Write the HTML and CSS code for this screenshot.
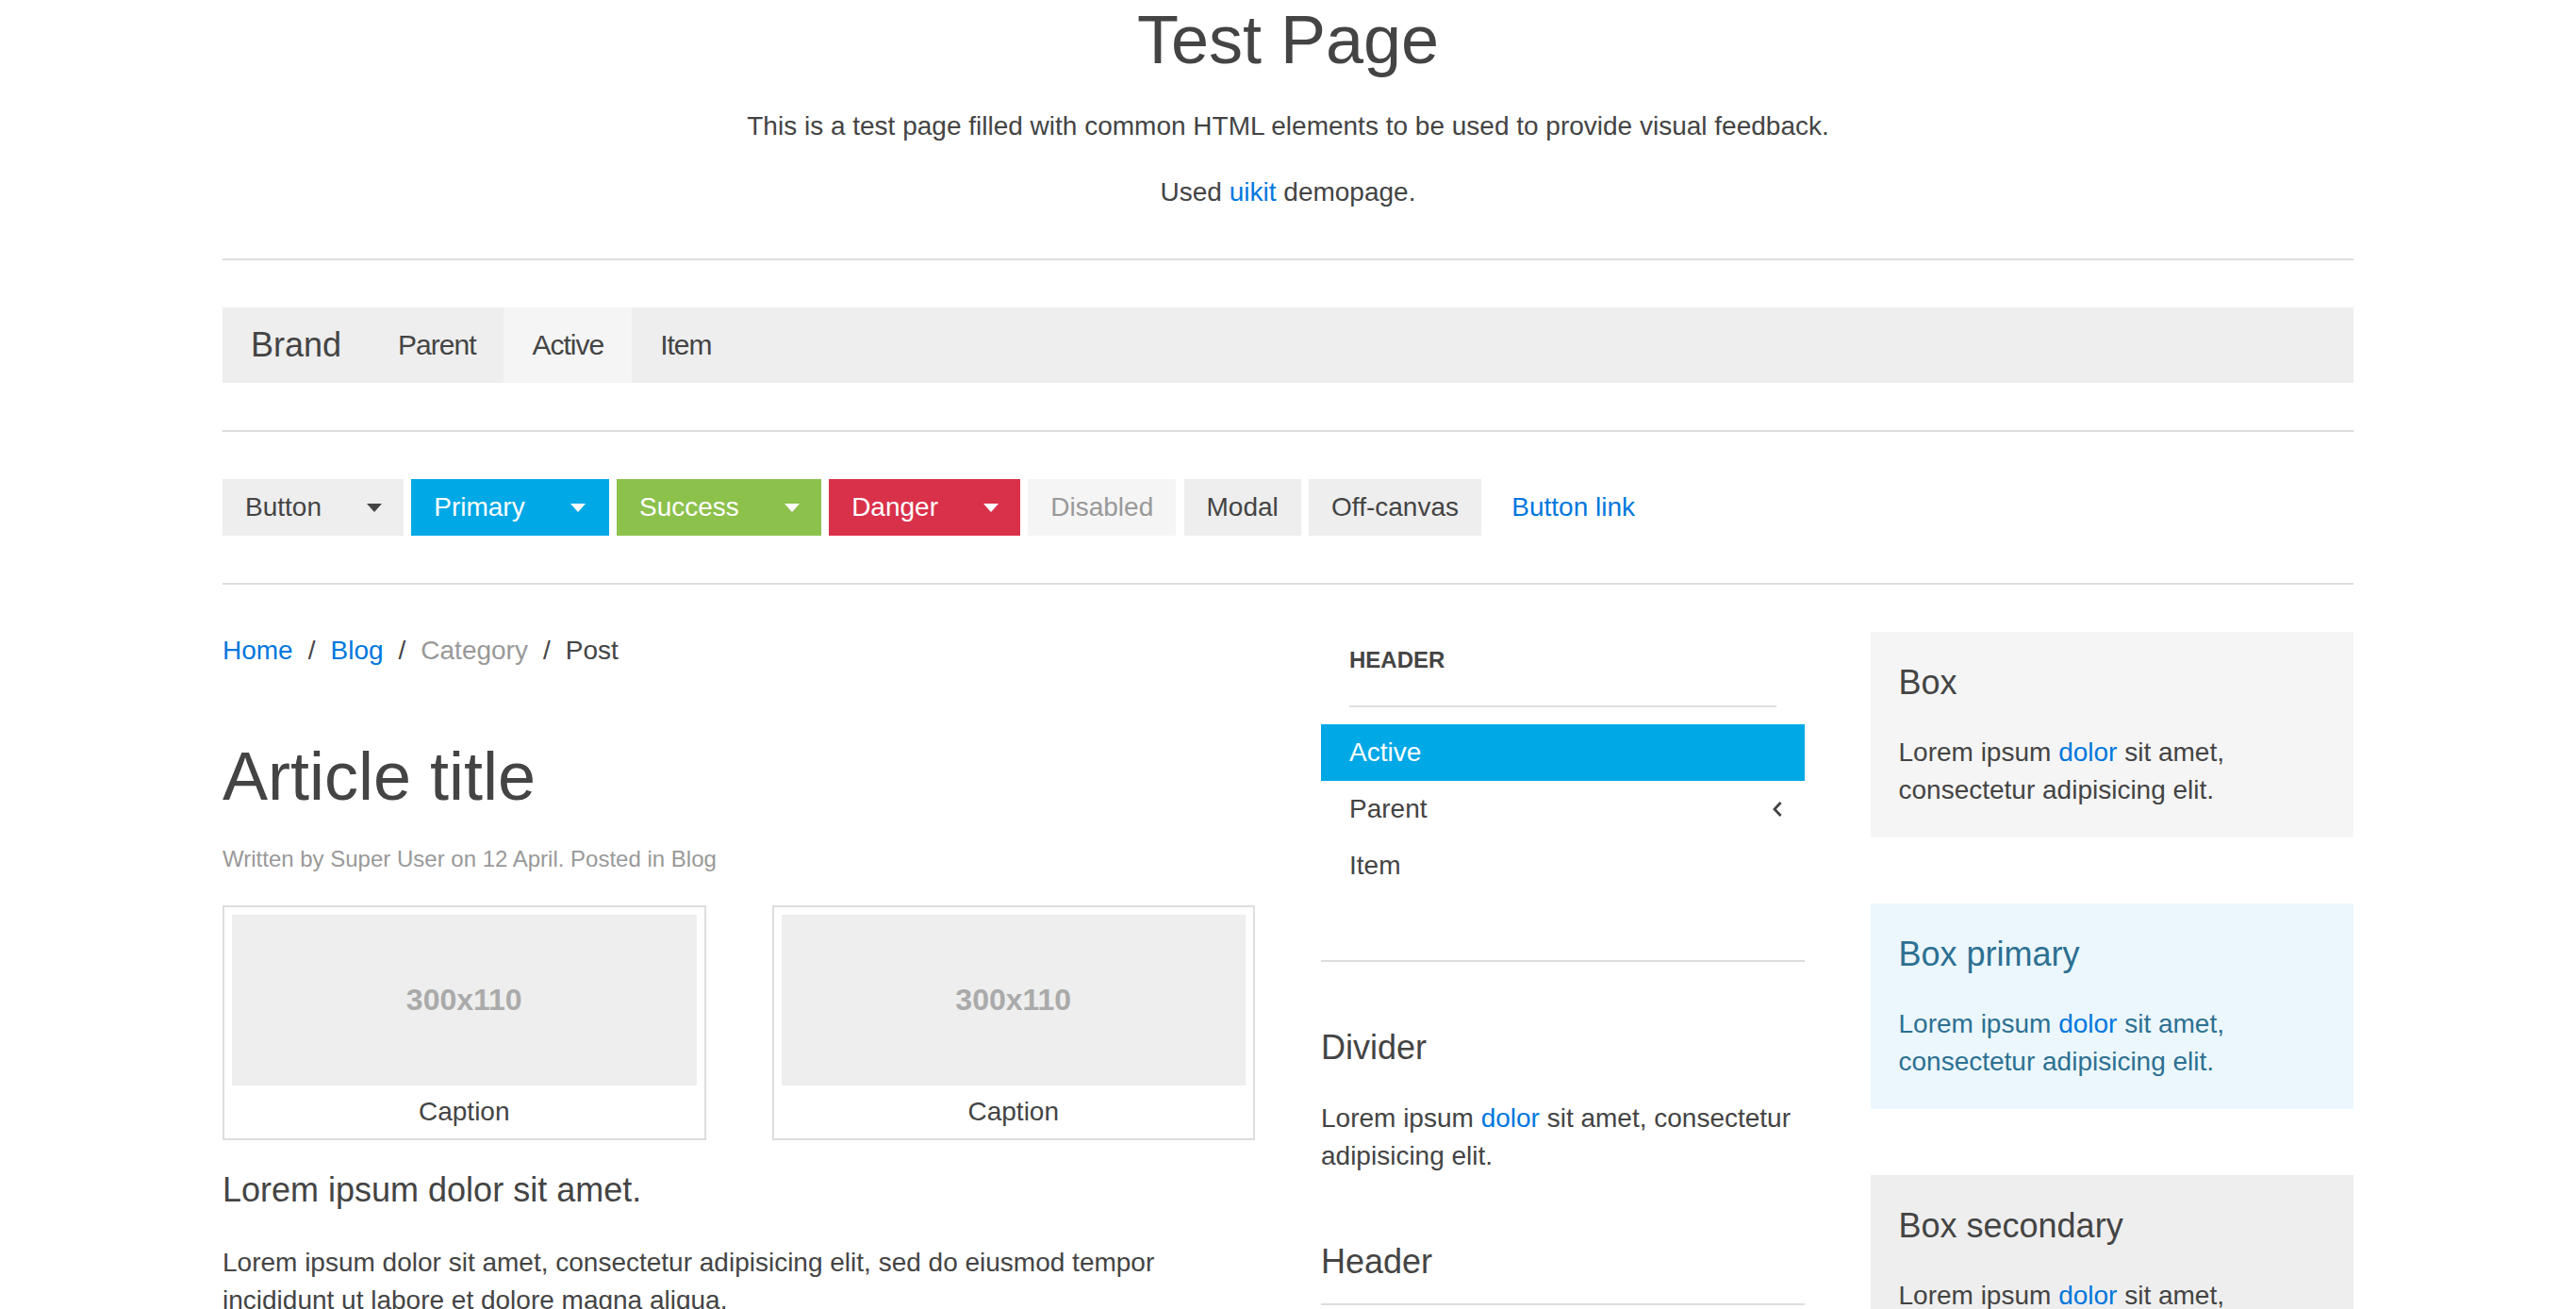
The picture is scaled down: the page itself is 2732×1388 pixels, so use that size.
FILE: index.html
```html
<!DOCTYPE html>
<html lang="en">
<head>
<meta charset="utf-8">
<title>Test Page</title>
<link rel="stylesheet" href="styles.css">
</head>
<body>
<div class="container">
  <header class="intro">
    <h1 class="page-title">Test Page</h1>
    <p>This is a test page filled with common HTML elements to be used to provide visual feedback.</p>
    <p>Used <a href="#">uikit</a> demopage.</p>
  </header>

  <hr class="divider">

  <nav class="navbar">
    <a class="navbar-brand" href="#">Brand</a>
    <ul class="navbar-nav">
      <li><a href="#">Parent</a></li>
      <li class="active"><a href="#">Active</a></li>
      <li><a href="#">Item</a></li>
    </ul>
  </nav>

  <hr class="divider">

  <div class="button-row">
    <button class="btn">Button<span class="caret"></span></button>
    <button class="btn btn-primary">Primary<span class="caret"></span></button>
    <button class="btn btn-success">Success<span class="caret"></span></button>
    <button class="btn btn-danger">Danger<span class="caret"></span></button>
    <button class="btn btn-disabled" disabled>Disabled</button>
    <button class="btn">Modal</button>
    <button class="btn">Off-canvas</button>
    <a class="btn btn-link" href="#">Button link</a>
  </div>

  <hr class="divider">

  <div class="layout">
    <main class="article-col">
      <ul class="breadcrumb">
        <li><a href="#">Home</a></li>
        <li><a href="#">Blog</a></li>
        <li class="muted">Category</li>
        <li class="current">Post</li>
      </ul>
      <article class="article">
        <h1 class="article-title">Article title</h1>
        <p class="article-meta">Written by Super User on 12 April. Posted in Blog</p>
        <div class="figures">
          <figure class="thumbnail">
            <div class="placeholder">300x110</div>
            <figcaption class="caption">Caption</figcaption>
          </figure>
          <figure class="thumbnail">
            <div class="placeholder">300x110</div>
            <figcaption class="caption">Caption</figcaption>
          </figure>
        </div>
        <h3 class="lead-heading">Lorem ipsum dolor sit amet.</h3>
        <p>Lorem ipsum dolor sit amet, consectetur adipisicing elit, sed do eiusmod tempor incididunt ut labore et dolore magna aliqua.</p>
        <p>Ut enim ad minim veniam, quis nostrud exercitation ullamco laboris nisi ut aliquip ex ea commodo consequat.</p>
      </article>
    </main>

    <aside class="side-col">
      <ul class="side-nav">
        <li class="nav-header">Header</li>
        <li class="nav-divider"></li>
        <li class="active"><a href="#">Active</a></li>
        <li class="parent"><a href="#"><span>Parent</span><svg class="chevron" width="12" height="18" viewBox="0 0 12 18" aria-hidden="true"><polyline points="9.6,2 3,9 9.6,16" fill="none" stroke="#444" stroke-width="2.8" stroke-linecap="butt" stroke-linejoin="miter"/></svg></a></li>
        <li><a href="#">Item</a></li>
      </ul>

      <section class="panel panel-divider">
        <h3 class="panel-title">Divider</h3>
        <p>Lorem ipsum <a href="#">dolor</a> sit amet, consectetur adipisicing elit.</p>
      </section>

      <section class="panel panel-header">
        <h3 class="panel-title">Header</h3>
        <p>Lorem ipsum <a href="#">dolor</a> sit amet, consectetur adipisicing elit.</p>
      </section>
    </aside>

    <aside class="box-col">
      <section class="box">
        <h3 class="panel-title">Box</h3>
        <p>Lorem ipsum <a href="#">dolor</a> sit amet, consectetur adipisicing elit.</p>
      </section>
      <section class="box box-primary">
        <h3 class="panel-title">Box primary</h3>
        <p>Lorem ipsum <a href="#">dolor</a> sit amet, consectetur adipisicing elit.</p>
      </section>
      <section class="box box-secondary">
        <h3 class="panel-title">Box secondary</h3>
        <p>Lorem ipsum <a href="#">dolor</a> sit amet, consectetur adipisicing elit.</p>
      </section>
    </aside>
  </div>
</div>
</body>
</html>
```

FILE: styles.css
```css
* {
  box-sizing: border-box;
}

html {
  background: #fff;
}

body {
  margin: 0;
  font-family: "Liberation Sans", Arial, Helvetica, sans-serif;
  font-size: 28px;
  line-height: 40px;
  color: #444;
  background: #fff;
}

a {
  color: #0077dd;
  text-decoration: none;
}

p {
  margin: 0 0 30px;
}

.container {
  max-width: 2400px;
  margin: 0 auto;
  padding: 0 70px;
}

/* intro */
.intro {
  text-align: center;
}

.page-title {
  margin: 0 0 30px;
  font-size: 72px;
  line-height: 84px;
  font-weight: normal;
  color: #444;
}

.intro p:last-child {
  margin-bottom: 0;
}

.divider {
  margin: 50px 0;
  height: 0;
  border: 0;
  border-top: 2px solid #ddd;
}

/* navbar */
.navbar {
  display: flex;
  height: 80px;
  background: #eee;
}

.navbar-brand {
  padding: 0 30px;
  font-size: 36px;
  line-height: 80px;
  color: #444;
}

.navbar-nav {
  display: flex;
  margin: 0;
  padding: 0;
  list-style: none;
}

.navbar-nav a {
  display: block;
  padding: 0 30px;
  font-size: 30px;
  letter-spacing: -1px;
  line-height: 80px;
  color: #444;
}

.navbar-nav .active a {
  background: #f5f5f5;
}

/* buttons */
.button-row {
  display: flex;
  gap: 8.3px;
}

.btn {
  display: inline-flex;
  align-items: center;
  height: 60px;
  margin: 0;
  padding: 0 24px;
  border: 0;
  border-radius: 0;
  background: #eee;
  color: #444;
  font-family: inherit;
  font-size: 28px;
  line-height: 60px;
}

.caret {
  width: 0;
  height: 0;
  margin-left: 48px;
  margin-right: -1px;
  border-top: 9px solid currentColor;
  border-left: 8.5px solid transparent;
  border-right: 8.5px solid transparent;
}

.btn-primary {
  background: #00a8e6;
  color: #fff;
  padding-right: 26px;
}

.btn-success {
  background: #8cc14c;
  color: #fff;
}

.btn-danger {
  background: #da314b;
  color: #fff;
}

.btn-disabled {
  background: #f5f5f5;
  color: #999;
}

.btn-link {
  background: transparent;
  color: #0077dd;
}

/* layout */
.layout {
  display: grid;
  grid-template-columns: 1095px 1fr 1fr;
  column-gap: 70px;
  align-items: start;
}

/* article column */
.breadcrumb {
  display: flex;
  margin: 0 0 71px;
  padding: 0;
  list-style: none;
}

.breadcrumb li + li::before {
  content: "/";
  margin: 0 16px;
  color: #444;
}

.breadcrumb .muted {
  color: #999;
}

.breadcrumb .current {
  color: #444;
}

.article-title {
  margin: 0 0 28px;
  font-size: 72px;
  line-height: 84px;
  font-weight: normal;
}

.article-meta {
  margin: 0 0 31px;
  font-size: 24px;
  line-height: 36px;
  color: #999;
}

.figures {
  display: grid;
  grid-template-columns: 1fr 1fr;
  column-gap: 70px;
}

.thumbnail {
  margin: 0;
  padding: 8px;
  border: 2px solid #ddd;
  background: #fff;
}

.placeholder {
  display: flex;
  align-items: center;
  justify-content: center;
  aspect-ratio: 300 / 110;
  background: #eee;
  color: #aaa;
  font-weight: bold;
  font-size: 32px;
}

.caption {
  padding-top: 8px;
  text-align: center;
}

.lead-heading {
  margin: 29px 0 33px;
  font-size: 36px;
  line-height: 48px;
  font-weight: normal;
}

/* side column */
.side-nav {
  margin: 0;
  padding: 0;
  list-style: none;
}

.nav-header {
  padding: 10px 30px;
  font-size: 24px;
  line-height: 40px;
  font-weight: bold;
  text-transform: uppercase;
}

.nav-divider {
  margin: 18px 30px;
  border-top: 2px solid #ddd;
}

.side-nav a {
  display: flex;
  align-items: center;
  justify-content: space-between;
  padding: 10px 30px;
  line-height: 40px;
  color: #444;
}

.side-nav .active a {
  background: #00a8e6;
  color: #fff;
}

.chevron {
  display: block;
  margin-right: -7px;
}

.panel-title {
  margin: 0 0 31px;
  font-size: 36px;
  line-height: 48px;
  font-weight: normal;
  color: #444;
}

.panel p {
  margin: 0;
}

.panel-divider {
  margin-top: 70px;
  padding-top: 67px;
  border-top: 2px solid #ddd;
}

.panel-header {
  margin-top: 68px;
}

.panel-header .panel-title {
  padding-bottom: 20px;
  border-bottom: 2px solid #ddd;
}

/* box column */
.box-col {
  display: flex;
  flex-direction: column;
  gap: 70px;
}

.box {
  padding: 30px;
  background: #f5f5f5;
  color: #444;
}

.box .panel-title {
  margin-bottom: 30px;
}

.box p {
  margin: 0;
}

.box-primary {
  background: #ebf7fd;
  color: #2d7091;
}

.box-primary .panel-title {
  color: #2d7091;
}

.box-secondary {
  background: #eee;
}
```
